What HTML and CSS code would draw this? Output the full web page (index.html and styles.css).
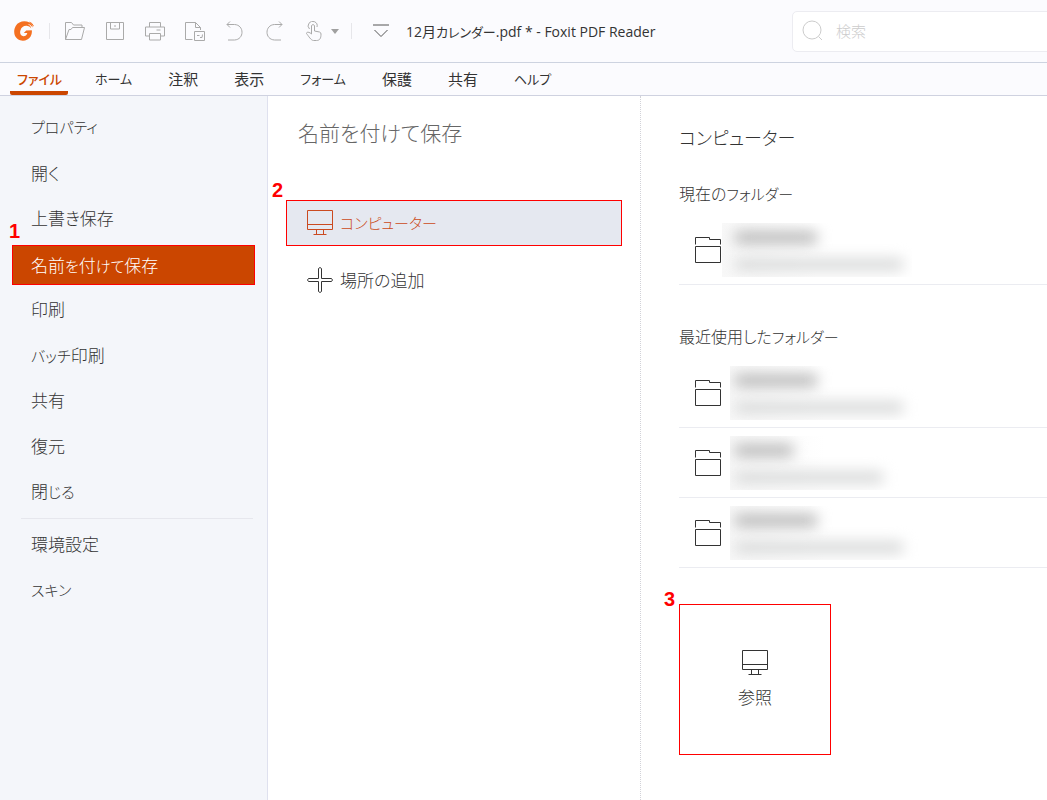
FILE: index.html
```html
<!DOCTYPE html>
<html lang="ja">
<head>
<meta charset="utf-8">
<title>12月カレンダー.pdf * - Foxit PDF Reader</title>
<link rel="stylesheet" href="styles.css">
</head>
<body>
<svg class="symbols" aria-hidden="true">
  <symbol id="monitor" viewBox="0 0 26 26"><path d="M.5.5h25v19H.5zM.5 14.500h25M9.500 19.500v5M16.500 19.500v5M6.500 24.500h13"/></symbol>
  <symbol id="folder" viewBox="0 0 28 28"><path d="M1.500 8.500v-7h14v2h11v5M1.500 10.500h25v16h-25z"/></symbol>
</svg>
<div class="app">
  <header class="titlebar">
    <svg class="logo" viewBox="0 0 20 20"><path fill="#f47021" d="M15.500 1.500C11-.8 4.600 0 1.700 5-.9 9.700-.1 15.400 3.600 18c4 2.900 10.500 1.900 13-2.500 1.200-2.100 1.500-4.200 1.200-6.200l-5.600.2-2.400 2.600 3.500-.1c-.6 2.200-2.100 3.300-3.900 3.200-2.600-.2-3.900-2.900-3-5.800C7.400 6 10.300 4.300 13.500 5c1.600.3 2.800 1.200 3.700 2.500C17 5.500 15.500 3.800 13.500 3c2.200.2 4 1.500 5 3.500.3-2.200-1-4-3-5z"/><path d="M15.500 1.200q3 .8 4 4" stroke="#f47021"/></svg>
    <span class="divider"></span>
    <nav class="tools" aria-label="クイックアクセス">
      <button type="button" aria-label="開く"><svg viewBox="0 0 22 20"><path d="M1.500 18.500V1.500h6l2 2.500h8.500v2.500M1.500 18.500h16l3-12h-12l-1.500 2H5L1.500 18.500"/></svg></button>
      <button type="button" aria-label="保存"><svg viewBox="0 0 22 20"><path d="M2.500 1.500h17v17h-17zM6.500 1.500v6.500h9V1.500M11 4v2"/></svg></button>
      <button type="button" aria-label="印刷"><svg viewBox="0 0 22 20"><path d="M5.500 6V1.500h11V6M5 15H1.500V6h19v9H17M5.500 12.500h11v6.500h-11zM12.500 9h4"/></svg></button>
      <button type="button" aria-label="ページ"><svg viewBox="0 0 22 20"><path d="M8.500 18.500h-7v-17h10l5 5V9M11.500 1.500v5h5M10.500 10.500h10v9h-10zM13 14.500h2.500M16 16.500h2l.5-3"/></svg></button>
      <button type="button" aria-label="元に戻す"><svg viewBox="0 0 22 20"><path d="M6 .5L3 3.500l3 3M3 3.500h7.500c10 .5 10 15 0 15.500H4"/></svg></button>
      <button type="button" aria-label="やり直し"><svg viewBox="0 0 22 20"><path d="M15 .5l3 3-3 3M18 3.500h-7.500c-10 .5-10 15 0 15.500H17"/></svg></button>
      <button type="button" aria-label="手のひら"><svg viewBox="0 0 22 20"><path d="M5.500 8a4.500 4.500 0 1 1 7.500-2M7.500 13V4.500q1.500-2 3 0V10l5 1q1.500.5 1.500 2c0 4-1 6.500-4.500 6.500h-3C7 19.500 4.500 15 2.500 12.500c0-2 3-1.500 5 .5"/></svg><svg class="caret" viewBox="0 0 8 5"><path d="M0 0h8L4 5z"/></svg></button>
    </nav>
    <span class="divider"></span>
    <button type="button" class="more" aria-label="カスタマイズ"><svg viewBox="0 0 16 14"><path d="M0 1h16M1.500 6L8 12.500 14.500 6"/></svg></button>
    <span class="doc">12月<span class="kana">カレンダー</span>.pdf * - Foxit PDF Reader</span>
    <label class="search"><svg viewBox="0 0 22 22"><circle cx="10" cy="10" r="9"/><path d="M16.500 16.500L20 20"/></svg><input type="text" placeholder="検索" aria-label="検索"></label>
  </header>
  <nav class="tabs">
    <a href="#" class="kana active">ファイル</a><a href="#" class="kana">ホーム</a><a href="#">注釈</a><a href="#">表示</a><a href="#" class="kana">フォーム</a><a href="#">保護</a><a href="#">共有</a><a href="#" class="kana">ヘルプ</a>
  </nav>
  <main class="body">
    <nav class="side">
      <div class="commands">
        <a href="#" class="kana">プロパティ</a>
        <a href="#">開く</a>
        <a href="#">上書き保存</a>
        <a href="#" class="active"><b class="step">1</b>名前<span class="kana">を</span>付<span class="kana">けて</span>保存</a>
        <a href="#">印刷</a>
        <a href="#"><span class="kana">バッチ</span>印刷</a>
        <a href="#">共有</a>
        <a href="#">復元</a>
        <a href="#">閉<span class="kana">じる</span></a>
      </div>
      <hr>
      <a href="#">環境設定</a>
      <a href="#" class="kana">スキン</a>
    </nav>
    <section class="places">
      <h1>名前を付けて保存</h1>
      <button type="button" class="place selected"><b class="step">2</b><svg class="line"><use href="#monitor"/></svg><span class="kana">コンピューター</span></button>
      <button type="button" class="place"><svg class="line" viewBox="0 0 26 26"><path d="M11.500 11.500v-10q1.500-2 3 0v10h10q2 1.500 0 3h-10v10q-1.500 2-3 0v-10h-10q-2-1.500 0-3z"/></svg>場所の追加</button>
    </section>
    <section class="folders">
      <h2>コンピューター</h2>
      <h3>現在の<span class="kana">フォルダー</span></h3>
      <ul>
        <li><svg class="folder"><use href="#folder"/></svg><span class="hidden-text near"><i class="name w-m"></i><i class="path w-l"></i></span></li>
      </ul>
      <h3>最近使用した<span class="kana">フォルダー</span></h3>
      <ul class="recent">
        <li><svg class="folder"><use href="#folder"/></svg><span class="hidden-text"><i class="name w-m"></i><i class="path w-l"></i></span></li>
        <li><svg class="folder"><use href="#folder"/></svg><span class="hidden-text"><i class="name w-s"></i><i class="path w-k"></i></span></li>
        <li><svg class="folder"><use href="#folder"/></svg><span class="hidden-text"><i class="name w-m"></i><i class="path w-l"></i></span></li>
      </ul>
      <button type="button" class="browse"><b class="step">3</b><svg class="line"><use href="#monitor"/></svg>参照</button>
    </section>
  </main>
</div>
</body>
</html>
```
FILE: styles.css
```css
* { box-sizing: border-box; }
body { margin: 0; background: #fff; color: #333; font: 300 17px/24px "Noto Sans CJK JP", sans-serif; font-feature-settings: "palt"; }
button, input { font: inherit; font-feature-settings: inherit; color: inherit; border: 0; background: none; padding: 0; }
a { color: inherit; text-decoration: none; }
svg { fill: none; flex: none; }
h1, h2, h3, ul { margin: 0; padding: 0; font-weight: 300; list-style: none; }
.kana { font-size: 15px; }
.symbols { position: absolute; width: 0; height: 0; }
.app { display: flex; flex-direction: column; min-height: 100vh; overflow: hidden; }

.titlebar { display: flex; align-items: center; height: 63px; padding-left: 14px; background: #fbfbfe; border-bottom: 1px solid #cdd3e0; }
.logo { width: 20px; height: 20px; margin-right: 15px; }
.divider { width: 1px; height: 16px; background: #e6e6ea; }
.tools { display: flex; gap: 18px; margin: 0 12px 0 14px; }
.tools button { display: flex; align-items: center; gap: 5px; }
.tools svg { width: 22px; height: 20px; stroke: #aaa; stroke-width: 1; }
.tools .caret { width: 8px; height: 5px; fill: #a0a0a0; stroke: none; }
.more { display: flex; margin: 0 17px 0 21px; }
.more svg { width: 16px; height: 14px; stroke: #555; stroke-width: 1; }
.doc { flex: none; padding-top: 1px; font-family: "Open Sans", "Noto Sans CJK JP", sans-serif; font-size: 14px; font-weight: 400; }
.doc .kana { font-size: 13px; }
.search { display: flex; align-items: center; width: 300px; height: 41px; margin: 0 -45px 0 auto; padding-left: 9px; gap: 12px; background: #fff; border: 1px solid #ececf1; border-radius: 5px; flex: none; }
.search svg { width: 22px; height: 22px; stroke: #ccc; stroke-width: 1; }
.search input { flex: 1; min-width: 0; font-size: 15px; }
.search input::placeholder { color: #ccc; opacity: 1; }

.tabs { display: flex; gap: 36px; height: 33px; padding-left: 10px; background: #fbfbfe; border-bottom: 1px solid #cfd2e0; font-size: 15px; font-weight: 400; line-height: 32px; }
.tabs .kana { font-size: 13px; }
.tabs .active { padding: 0 6px 0 7px; margin-right: -9px; color: #cb4600; font-weight: 500; border-bottom: 4px solid #cb4600; border-radius: 2px; }

.body { display: flex; flex: 1; }
.side { display: flex; flex-direction: column; gap: 6px; width: 268px; flex: none; padding: 12px 12px 0; background: #f4f6fa; border-right: 1px solid #dfe1ee; }
.commands { display: flex; flex-direction: column; justify-content: space-between; height: 404px; }
.side a { position: relative; height: 40px; padding-left: 19px; line-height: 38px; }
.side .active { color: #fff; background: #cb4600; border: 1px solid #f00; padding-left: 18px; line-height: 37px; }
.side hr { width: 232px; height: 1px; margin: 0 0 0 9px; border: 0; background: #e6e7ed; }
.step { position: absolute; color: #f00; font: 700 20px/22px "Liberation Sans", sans-serif; }
.side .step { left: -4px; top: -26px; }
.places { width: 373px; flex: none; padding: 22px 18px 0; border-right: 1px dotted #d2d2d8; }
.places h1 { margin: 0 0 54px 12px; font-size: 21px; line-height: 28px; color: #666; }
.place { position: relative; display: flex; align-items: center; gap: 7px; width: 100%; height: 46px; margin-bottom: 11px; padding-left: 20px; border: 1px solid transparent; text-align: left; }
.selected { color: #cb4a20; background: #e5e8f0; border-color: #f00; }
.places .step { left: -15px; top: -22px; }
.line { width: 26px; height: 26px; stroke: currentColor; stroke-width: 1; }
.folders { flex: 1; min-width: 0; padding: 27px 0 0 38px; }
.folders h2 { font-size: 18px; line-height: 28px; margin-bottom: 30px; }
.folders h3 { font-size: 16px; line-height: 24px; margin-bottom: 9px; }
.folders ul { margin-bottom: 39px; }
.folders .recent { margin-bottom: 36px; }
.folders li { display: flex; align-items: center; height: 70px; padding-left: 15px; gap: 8px; border-bottom: 1px solid #ebecf1; }
.folder { width: 28px; height: 28px; stroke: #333; stroke-width: 1; }
.hidden-text { display: flex; flex-direction: column; gap: 14px; width: 190px; height: 54px; padding: 8px 4px; background: linear-gradient(90deg, #f8f8f8, #fff 50%); overflow: hidden; }
.near { margin-left: -8px; padding-left: 12px; }
.hidden-text i { display: block; height: 13px; flex: none; border-radius: 6px; filter: blur(7px); }
.name { background: #bbb; }
.path { background: #dadbdb; }
.w-s { width: 60px; } .w-m { width: 84px; } .w-k { width: 150px; } .w-l { width: 170px; }
.browse { position: relative; display: flex; flex-direction: column; align-items: center; justify-content: center; gap: 9px; width: 152px; height: 151px; border: 1px solid #f00; }
.browse .step { left: -16px; top: -17px; }
```
